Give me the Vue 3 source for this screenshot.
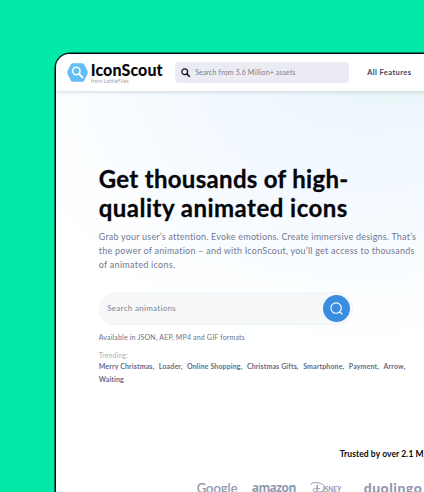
<script setup>
const trending = ['Merry Christmas', 'Loader', 'Online Shopping', 'Christmas Gifts', 'Smartphone', 'Payment', 'Arrow', 'Waiting']
</script>

<template>
  <div class="stage">
    <main class="window">
      <header class="bar">
        <a class="brand">
          <svg class="mark" width="21" height="19" viewBox="0 0 21 19">
            <path d="M5.8 0.2h9.4c1 0 1.5.4 2 1.1l3.2 6.5c.5 1.1.5 2.3 0 3.4l-3.2 6.3c-.5.9-1 1.3-2 1.3H5.8c-1 0-1.5-.4-2-1.3L.6 11.2c-.5-1.1-.5-2.3 0-3.4l3.2-6.5c.5-.7 1-1.1 2-1.1z" fill="#63bdf6" />
            <circle cx="9.3" cy="8" r="3.7" fill="none" stroke="#fff" stroke-width="1.5" />
            <path d="M12.1 10.900l3.400 3.500" stroke="#fff" stroke-width="1.9" stroke-linecap="round" />
          </svg>
          <span class="names">
            <span class="name">IconScout</span>
            <span class="from">from LottieFiles</span>
          </span>
        </a>
        <div class="find">
          <svg width="9" height="9" viewBox="0 0 9 9" fill="none" stroke="#11121a">
            <circle cx="3.7" cy="3.7" r="2.9" stroke-width="1.25" />
            <path d="M5.9 5.9l2.3 2.3" stroke-width="1.6" stroke-linecap="round" />
          </svg>
          <span>Search from 5.6 Million+ assets</span>
        </div>
        <a class="features">All Features</a>
      </header>

      <section class="hero">
        <h1><span class="h-one">Get thousands of high-</span><br><span class="h-two">quality animated icons</span></h1>
        <p class="lead">
          <span class="l-one">Grab your user’s attention. Evoke emotions. Create immersive designs. That’s</span><br>
          <span class="l-two">the power of animation – and with IconScout, you’ll get access to thousands</span><br>
          <span class="l-three">of animated icons.</span>
        </p>
        <div class="search">
          <span>Search animations</span>
          <button aria-label="Search">
            <svg width="13" height="13" viewBox="0 0 13 13" fill="none" stroke="#fff" stroke-width="1.1" stroke-linecap="round">
              <circle cx="6.1" cy="6.1" r="5.2" />
              <path d="M9.8 9.8l2.2 2.2" />
            </svg>
          </button>
        </div>
        <p class="formats">Available in JSON, AEP, MP4 and GIF formats</p>
        <p class="label">Trending:</p>
        <div class="tags">
          <span v-for="(tag, i) in trending" :key="tag">{{ tag }}{{ i < trending.length - 1 ? ',' : '' }}</span>
        </div>
      </section>

      <section class="trusted">
        <p>Trusted by over 2.1 M</p>
        <div class="logos">
          <span class="google">Google</span>
          <span class="amazon">amazon</span>
          <span class="disney">
            <svg width="17" height="12" viewBox="0 0 17 12" fill="none" stroke="#9298b2" stroke-linecap="round">
              <path d="M.9 2.400C1.500.3 6-.1 10.600 1.500c4.700 1.700 6 5.500 2.400 7.400-3.400 1.800-9.800 1.500-9.800-.7 0-1.600 3.300-2.200 6.600-1.500" stroke-width="1" />
              <path d="M7.200 3.200v7.300" stroke-width="1.300" />
            </svg>
            <span>isney</span>
          </span>
          <span class="duolingo">duolingo</span>
        </div>
      </section>
    </main>
  </div>
</template>

<style>
body { background: #00e9a9; overflow: hidden; }
</style>

<style scoped>
* { box-sizing: border-box; }
.stage {
  height: 492px;
  padding: 52.500px 0 0 54.700px;
  overflow: hidden;
  background: #00e9a9;
  font-family: Lato, "Liberation Sans", sans-serif;
  white-space: nowrap;
}
h1, p { margin: 0; }
.window {
  width: 600px;
  height: 500px;
  border: 1px solid #050b0b;
  box-shadow: 0 0 0 0.500px #050b0b;
  border-radius: 15px;
  overflow: hidden;
  background: radial-gradient(ellipse 150px 50px at 345px 30px, #eaf6f7 0%, rgba(234, 246, 247, 0) 100%),
    radial-gradient(ellipse 400px 300px at 300px 20px, #edf6ff 0%, #f3f9ff 40%, #fcfeff 75%, #fff 100%) #fff;
}
.bar {
  position: relative;
  display: flex;
  align-items: center;
  height: 37px;
  padding-left: 11px;
  background: #fff;
  box-shadow: 0 1px 4px rgba(72, 82, 110, 0.220);
}
.brand { display: flex; align-items: center; width: 108px; gap: 3px; }
.mark { flex: none; }
.names { display: flex; flex-direction: column; }
.name { font-size: 16px; line-height: 16px; font-weight: 900; letter-spacing: 0.100px; color: #07080c; }
.from { font-size: 5.300px; line-height: 6px; margin-bottom: -1px; letter-spacing: 0.100px; color: #a5a6aa; }
.find {
  display: flex;
  align-items: center;
  gap: 5.500px;
  width: 174px;
  height: 21px;
  padding-left: 6px;
  border-radius: 4px;
  background: #ebecf3;
  color: #797c8d;
  font-size: 7px;
  letter-spacing: 0.140px;
}
.features { margin-left: 18.500px; font-size: 7.500px; font-weight: 700; letter-spacing: 0.400px; color: #41445d; }
.hero { padding: 73px 0 0 43px; }
h1 { font-size: 24px; line-height: 29px; font-weight: 700; color: #050609; -webkit-text-stroke: 0.300px #050609; }
.h-one { letter-spacing: 0.310px; }
.h-two { letter-spacing: 0.480px; }
.lead { margin-top: 8px; font-size: 9px; line-height: 14px; color: #737890; }
.l-one { letter-spacing: 0.205px; }
.l-two { letter-spacing: 0.235px; }
.l-three { letter-spacing: 0.280px; }
.search {
  display: flex;
  align-items: center;
  justify-content: space-between;
  width: 254px;
  height: 33px;
  margin-top: 20px;
  padding: 0 2px 0 7.500px;
  border: 1px solid #f1f4f7;
  border-radius: 17px;
  background: #f6f8fa;
  font-size: 8px;
  letter-spacing: 0.300px;
  color: #7e818b;
}
.search button {
  display: grid;
  place-items: center;
  width: 27px;
  height: 27px;
  padding: 0;
  border: 0;
  border-radius: 50%;
  background: #3b8edf;
}
.formats { margin-top: 7px; font-size: 7px; line-height: 10px; letter-spacing: 0.170px; color: #6d728b; }
.label { margin-top: 8px; font-size: 7px; line-height: 10px; letter-spacing: 0.120px; color: #adafb8; }
.tags {
  display: flex;
  flex-wrap: wrap;
  width: 318px;
  column-gap: 4.500px;
  font-size: 7px;
  line-height: 13px;
  font-weight: 700;
  letter-spacing: 0.137px;
  color: #686c87;
}
.trusted { padding: 62px 0 0 141px; }
.trusted p { padding-left: 143px; font-size: 8.500px; line-height: 12px; font-weight: 700; letter-spacing: 0.085px; color: #08090d; }
.logos { display: flex; height: 20px; margin-top: 20px; color: #9298b2; }
.google { width: 55px; font-size: 13px; line-height: 17px; -webkit-text-stroke: 0.250px #9298b2; }
.amazon { width: 58px; font-family: "Open Sans", sans-serif; font-size: 12px; line-height: 16px; font-weight: 700; letter-spacing: -0.550px; }
.disney { display: flex; width: 54px; padding-top: 2px; }
.disney svg { flex: none; }
.disney span { margin-left: -4px; font-size: 10.500px; line-height: 12px; font-weight: 700; font-style: italic; font-variant: small-caps; }
.duolingo { font-size: 14px; line-height: 16px; font-weight: 900; letter-spacing: 0.500px; }
</style>
